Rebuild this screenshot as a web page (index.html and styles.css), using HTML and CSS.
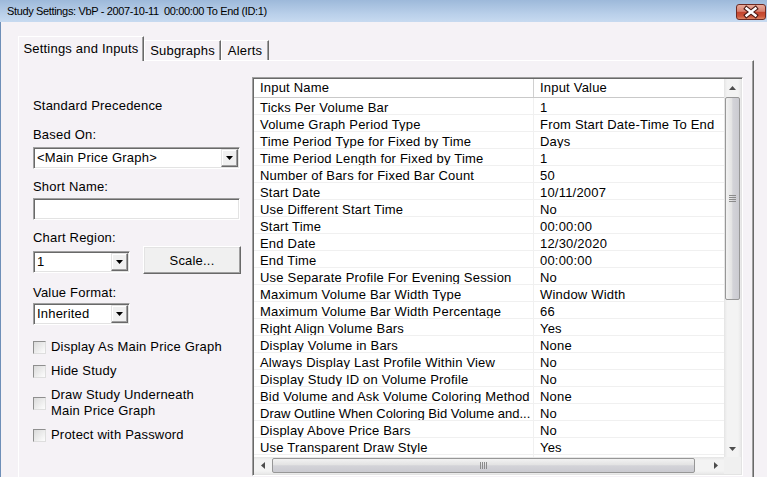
FILE: index.html
```html
<!DOCTYPE html>
<html lang="en">

<head>
    <meta charset="UTF-8">
    <title>Study Settings</title>
    <link rel="stylesheet" href="styles.css">
</head>

<body>

    <header class="titlebar">
        <span class="title">Study Settings: VbP - 2007-10-11  00:00:00 To End (ID:1)</span>
        <button class="close">
            <svg width="28" height="14" viewBox="0 0 28 14">
                <path d="M9.5 3.5 L18.5 10.5 M18.5 3.5 L9.5 10.5" stroke="#4a1a14" stroke-width="4.6" stroke-linecap="square" fill="none"/>
                <path d="M9.5 3.5 L18.5 10.5 M18.5 3.5 L9.5 10.5" stroke="#fff" stroke-width="2.4" stroke-linecap="square" fill="none"/>
            </svg>
        </button>
    </header>

    <main class="client">
        <nav class="tabs">
            <div class="tab active tab-settings">Settings and Inputs</div>
            <div class="tab tab-subgraphs">Subgraphs</div>
            <div class="tab tab-alerts">Alerts</div>
        </nav>

        <section class="panel">
            <div class="left">
                <div class="label precedence">Standard Precedence</div>

                <div class="label based-label">Based On:</div>
                <div class="combo combo-wide based-combo">
                    <span class="combo-text">&lt;Main Price Graph&gt;</span>
                    <span class="drop"><svg width="7" height="4" viewBox="0 0 7 4"><polygon points="0,0 7,0 3.5,4" fill="#000"/></svg></span>
                </div>

                <div class="label">Short Name:</div>
                <div class="input"></div>

                <div class="label">Chart Region:</div>
                <div class="region-row">
                    <div class="combo combo-small region-combo">
                        <span class="combo-text">1</span>
                        <span class="drop"><svg width="7" height="4" viewBox="0 0 7 4"><polygon points="0,0 7,0 3.5,4" fill="#000"/></svg></span>
                    </div>
                    <button class="scale">Scale...</button>
                </div>

                <div class="label format-label">Value Format:</div>
                <div class="combo combo-small format-combo">
                    <span class="combo-text">Inherited</span>
                    <span class="drop"><svg width="7" height="4" viewBox="0 0 7 4"><polygon points="0,0 7,0 3.5,4" fill="#000"/></svg></span>
                </div>

                <div class="checks">
                    <div class="check"><span class="box"></span><span>Display As Main Price Graph</span></div>
                    <div class="check"><span class="box"></span><span>Hide Study</span></div>
                    <div class="check"><span class="box"></span><span>Draw Study Underneath<br>Main Price Graph</span></div>
                    <div class="check"><span class="box"></span><span>Protect with Password</span></div>
                </div>
            </div>

            <div class="grid">
                <div class="grid-main">
                    <div class="table">
                        <div class="head">
                            <span class="hcell name">Input Name</span>
                            <span class="hcell value">Input Value</span>
                        </div>
                        <div class="row"><span class="cell name">Ticks Per Volume Bar</span><span class="cell value">1</span></div>
                        <div class="row"><span class="cell name">Volume Graph Period Type</span><span class="cell value">From Start Date-Time To End</span></div>
                        <div class="row"><span class="cell name">Time Period Type for Fixed by Time</span><span class="cell value">Days</span></div>
                        <div class="row"><span class="cell name">Time Period Length for Fixed by Time</span><span class="cell value">1</span></div>
                        <div class="row"><span class="cell name">Number of Bars for Fixed Bar Count</span><span class="cell value">50</span></div>
                        <div class="row"><span class="cell name">Start Date</span><span class="cell value">10/11/2007</span></div>
                        <div class="row"><span class="cell name">Use Different Start Time</span><span class="cell value">No</span></div>
                        <div class="row"><span class="cell name">Start Time</span><span class="cell value">00:00:00</span></div>
                        <div class="row"><span class="cell name">End Date</span><span class="cell value">12/30/2020</span></div>
                        <div class="row"><span class="cell name">End Time</span><span class="cell value">00:00:00</span></div>
                        <div class="row"><span class="cell name">Use Separate Profile For Evening Session</span><span class="cell value">No</span></div>
                        <div class="row"><span class="cell name">Maximum Volume Bar Width Type</span><span class="cell value">Window Width</span></div>
                        <div class="row"><span class="cell name">Maximum Volume Bar Width Percentage</span><span class="cell value">66</span></div>
                        <div class="row"><span class="cell name">Right Align Volume Bars</span><span class="cell value">Yes</span></div>
                        <div class="row"><span class="cell name">Display Volume in Bars</span><span class="cell value">None</span></div>
                        <div class="row"><span class="cell name">Always Display Last Profile Within View</span><span class="cell value">No</span></div>
                        <div class="row"><span class="cell name">Display Study ID on Volume Profile</span><span class="cell value">No</span></div>
                        <div class="row"><span class="cell name">Bid Volume and Ask Volume Coloring Method</span><span class="cell value">None</span></div>
                        <div class="row"><span class="cell name tight">Draw Outline When Coloring Bid Volume and...</span><span class="cell value">No</span></div>
                        <div class="row"><span class="cell name">Display Above Price Bars</span><span class="cell value">No</span></div>
                        <div class="row"><span class="cell name">Use Transparent Draw Style</span><span class="cell value">Yes</span></div>
                        <div class="row"><span class="cell name"></span><span class="cell value"></span></div>
                    </div>

                    <div class="vscroll">
                        <span class="arrow"><svg width="7" height="4" viewBox="0 0 7 4"><polygon points="0,4 3.5,0 7,4" fill="#4d4d4d"/></svg></span>
                        <span class="vthumb">
                            <svg width="7" height="7" viewBox="0 0 7 7">
                                <path d="M0 0.5 H7 M0 2.5 H7 M0 4.5 H7 M0 6.5 H7" stroke="#8b8b8b" stroke-width="1"/>
                            </svg>
                        </span>
                        <span class="fill"></span>
                        <span class="arrow"><svg width="7" height="4" viewBox="0 0 7 4"><polygon points="0,0 7,0 3.5,4" fill="#4d4d4d"/></svg></span>
                    </div>
                </div>

                <div class="hscroll-row">
                    <div class="hscroll">
                        <span class="arrow"><svg width="4" height="7" viewBox="0 0 4 7"><polygon points="4,0 4,7 0,3.5" fill="#4d4d4d"/></svg></span>
                        <span class="hthumb">
                            <svg width="7" height="7" viewBox="0 0 7 7">
                                <path d="M0.5 0 V7 M2.5 0 V7 M4.5 0 V7 M6.5 0 V7" stroke="#8b8b8b" stroke-width="1"/>
                            </svg>
                        </span>
                        <span class="fill"></span>
                        <span class="arrow"><svg width="4" height="7" viewBox="0 0 4 7"><polygon points="0,0 0,7 4,3.5" fill="#4d4d4d"/></svg></span>
                    </div>
                    <div class="corner"></div>
                </div>
            </div>
        </section>
    </main>

</body>

</html>
```

FILE: styles.css
```css
body {
    margin: 0;
    overflow: hidden;
    background-color: #f5f2f6;
    font-family: "Liberation Sans", Arial, sans-serif;
    font-size: 13px;
    letter-spacing: 0.2px;
    color: #000;
}

/* title bar */
.titlebar {
    display: flex;
    height: 22px;
    background: linear-gradient(#9db9da, #bad0ea 65%, #c7daf0);
}

.title {
    padding-left: 7px;
    font-size: 11px;
    letter-spacing: -0.35px;
    line-height: 22px;
    white-space: pre;
}

.close {
    margin: 4px 1px 0 auto;
    width: 30px;
    height: 16px;
    padding: 0;
    border: 1px solid #6e2a22;
    border-radius: 3px;
    background: linear-gradient(#e8ab9b, #d88170 45%, #c4452e 52%, #cb5439 80%, #de8565);
}

.close svg {
    display: block;
}

/* client area */
.client {
    height: 455px;
    box-sizing: border-box;
    border-left: 1px solid #6e8fb8;
    padding: 14px 0 0 17px;
}

.tabs {
    display: flex;
    align-items: flex-end;
    height: 24px;
}

.tab {
    box-sizing: border-box;
    height: 20px;
    padding-top: 2px;
    line-height: 15px;
    text-align: center;
    border-top: 1px solid #fff;
    border-left: 1px solid #fff;
    border-right: 1px solid #696969;
    box-shadow: inset -1px 0 #a0a0a0;
}

.tab.active {
    position: relative;
    z-index: 1;
    height: 25px;
    margin-bottom: -1px;
    padding-top: 4px;
    background-color: #f5f2f6;
}

.tab-settings {
    width: 126px;
}

.tab-subgraphs {
    width: 77px;
}

.tab-alerts {
    width: 48px;
}

.panel {
    display: flex;
    width: 736px;
    height: 420px;
    box-sizing: border-box;
    border-top: 1px solid #fff;
    border-left: 1px solid #fff;
    border-right: 1px solid #696969;
    box-shadow: inset -1px 0 #a0a0a0;
}

/* left column */
.left {
    width: 233px;
    box-sizing: border-box;
    padding: 37px 0 0 14px;
}

.label {
    margin-top: 10px;
    line-height: 15px;
}

.label.precedence {
    margin-top: 0;
}

.label.based-label {
    margin-top: 14px;
}

.label.format-label {
    margin-top: 11px;
}

.combo,
.input {
    display: flex;
    height: 22px;
    box-sizing: border-box;
    border: 1px solid;
    border-color: #a0a0a0 #fff #fff #a0a0a0;
    box-shadow: inset 1px 1px #696969, inset -1px -1px #e3e3e3;
    background-color: #fff;
}

.input {
    width: 207px;
    margin-top: 4px;
}

.combo-wide {
    width: 207px;
}

.combo-small {
    width: 97px;
}

.based-combo {
    margin-top: 5px;
}

.format-combo {
    margin-top: 3px;
}

.combo-text {
    flex: 1;
    padding: 0 0 0 3px;
    line-height: 20px;
    white-space: nowrap;
    overflow: hidden;
}

.drop {
    display: flex;
    align-items: center;
    justify-content: center;
    width: 17px;
    height: 18px;
    margin: 1px 1px 1px 0;
    box-sizing: border-box;
    border: 1px solid;
    border-color: #e3e3e3 #696969 #696969 #e3e3e3;
    box-shadow: inset -1px -1px #a0a0a0, inset 1px 1px #fff;
    background-color: #f0f0f0;
}

.region-row {
    display: flex;
    align-items: flex-start;
    margin-top: 1px;
}

.region-combo {
    margin-top: 5px;
}

.scale {
    width: 98px;
    height: 28px;
    margin-left: 13px;
    padding: 0;
    border: 1px solid;
    border-color: #fff #696969 #696969 #fff;
    box-shadow: inset -1px -1px #a0a0a0, inset 1px 1px #e3e3e3;
    background-color: #f0f0f0;
    font-family: inherit;
    font-size: 13px;
    letter-spacing: inherit;
    color: #000;
}

.checks {
    display: flex;
    flex-direction: column;
    gap: 8px;
    margin-top: 14px;
}

.check {
    display: flex;
    align-items: center;
    line-height: 16px;
}

.box {
    flex: none;
    width: 13px;
    height: 13px;
    margin-right: 5px;
    box-sizing: border-box;
    border: 1px solid;
    border-color: #8f8f8f #dedede #dedede #8f8f8f;
    background: linear-gradient(135deg, #dadada, #fdfdfd);
}

/* inputs grid */
.grid {
    display: flex;
    flex-direction: column;
    width: 491px;
    height: 399px;
    margin-top: 16px;
    box-sizing: border-box;
    padding: 1px;
    border: 1px solid;
    border-color: #a0a0a0 #fff #fff #a0a0a0;
    box-shadow: inset 1px 1px #696969, inset -1px -1px #e3e3e3;
    background-color: #fff;
}

.grid-main {
    display: flex;
    height: 378px;
}

.table {
    width: 470px;
    overflow: hidden;
}

.head {
    display: flex;
    height: 19px;
    box-sizing: border-box;
    border-bottom: 1px solid #c9c9c9;
    line-height: 18px;
}

.hcell.name {
    width: 280px;
    box-sizing: border-box;
    padding-left: 6px;
    border-right: 1px solid #d0d0d0;
}

.hcell.value {
    padding-left: 6px;
}

.row {
    display: flex;
    height: 17px;
    box-sizing: border-box;
    border-bottom: 1px solid #f0f0f0;
}

.cell {
    box-sizing: border-box;
    padding-top: 4px;
    line-height: 12px;
    white-space: nowrap;
    overflow: hidden;
}

.cell.name {
    width: 280px;
    padding-left: 6px;
    border-right: 1px solid #f0f0f0;
}

.cell.tight {
    letter-spacing: 0;
}

.cell.value {
    flex: 1;
    padding-left: 6px;
}

/* scrollbars */
.vscroll {
    display: flex;
    flex-direction: column;
    width: 17px;
    background: linear-gradient(to right, #e4e4e4, #f3f3f3 18%, #f3f3f3 82%, #e8e8e8);
}

.arrow {
    display: flex;
    flex: none;
    align-items: center;
    justify-content: center;
    width: 17px;
    height: 17px;
}

.fill {
    flex: 1;
}

.vthumb {
    display: flex;
    align-items: center;
    justify-content: center;
    height: 203px;
    margin: 1px 1px 0;
    box-sizing: border-box;
    border: 1px solid #979797;
    border-radius: 2px;
    background: linear-gradient(to right, #f2f2f2, #e3e3e3 45%, #d3d3d8 52%, #cbcbd1);
}

.hscroll-row {
    display: flex;
    height: 17px;
}

.hscroll {
    display: flex;
    width: 470px;
    background: linear-gradient(#e4e4e4, #f3f3f3 18%, #f3f3f3 82%, #e8e8e8);
}

.hthumb {
    display: flex;
    align-items: center;
    justify-content: center;
    width: 423px;
    margin: 1px 0 1px 1px;
    box-sizing: border-box;
    border: 1px solid #979797;
    border-radius: 2px;
    background: linear-gradient(#f2f2f2, #e3e3e3 45%, #d3d3d8 52%, #cbcbd1);
}

.corner {
    width: 17px;
    background-color: #f0f0f0;
}
```
